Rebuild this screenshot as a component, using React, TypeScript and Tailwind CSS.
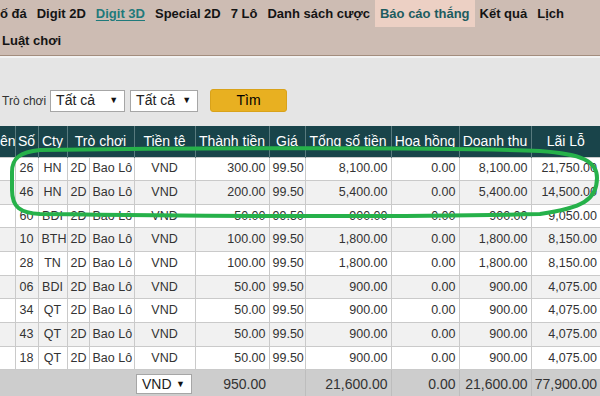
import React from "react";

const navItems: { label: string; kind?: "link" | "active" }[] = [
  { label: "ố đá" },
  { label: "Digit 2D" },
  { label: "Digit 3D", kind: "link" },
  { label: "Special 2D" },
  { label: "7 Lô" },
  { label: "Danh sách cược" },
  { label: "Báo cáo thắng", kind: "active" },
  { label: "Kết quả" },
  { label: "Lịch" },
];

type Row = [string, string, string, string, string, string, string, string];

const rows: Row[] = [
  ["26", "HN", "300.00", "99.50", "8,100.00", "0.00", "8,100.00", "21,750.00"],
  ["46", "HN", "200.00", "99.50", "5,400.00", "0.00", "5,400.00", "14,500.00"],
  ["60", "BDI", "50.00", "99.50", "900.00", "0.00", "900.00", "9,050.00"],
  ["10", "BTH", "100.00", "99.50", "1,800.00", "0.00", "1,800.00", "8,150.00"],
  ["28", "TN", "100.00", "99.50", "1,800.00", "0.00", "1,800.00", "8,150.00"],
  ["06", "BDI", "50.00", "99.50", "900.00", "0.00", "900.00", "4,075.00"],
  ["34", "QT", "50.00", "99.50", "900.00", "0.00", "900.00", "4,075.00"],
  ["43", "QT", "50.00", "99.50", "900.00", "0.00", "900.00", "4,075.00"],
  ["18", "QT", "50.00", "99.50", "900.00", "0.00", "900.00", "4,075.00"],
];

const colWidths = [15, 23, 29, 22, 45, 61, 74, 36, 86, 68, 72, 69];

function FakeSelect({ label, w, h, textSize }: { label: string; w: string; h: string; textSize: string }) {
  return (
    <div
      className={`${w} ${h} ${textSize} flex items-center justify-between border border-[#a6a6a6] bg-white pl-[5px] pr-[6px] text-[#222]`}
    >
      <span>{label}</span>
      <span className="text-[9px] leading-none text-[#111]">▼</span>
    </div>
  );
}

export default function App() {
  const th = "border-x border-[#587a7e] font-normal text-[14px] text-white overflow-hidden whitespace-nowrap";
  const td = "border border-[#cacaca] px-[3px] overflow-hidden whitespace-nowrap";
  return (
    <div
      className="relative w-[600px] h-[396px] overflow-hidden bg-[#e5e5e5]"
      style={{ fontFamily: '"Liberation Sans", Arial, sans-serif' }}
    >
      {/* Top navigation */}
      <div className="h-[56px] border-b border-[#a38d7e] bg-[#cdbcb3]">
        <div className="flex h-[27px] items-stretch ml-[-5px]">
          {navItems.map((it) => (
            <div
              key={it.label}
              className={`flex items-center px-[5px] text-[13px] font-bold whitespace-nowrap ${
                it.kind === "active"
                  ? "bg-[#ecd0c4] text-[#1d5c60]"
                  : it.kind === "link"
                  ? "text-[#1f7a7b] underline underline-offset-2"
                  : "text-[#141414]"
              }`}
            >
              {it.label}
            </div>
          ))}
        </div>
        <div className="flex h-[29px] items-center pl-[2px] pb-[1px] text-[13px] font-bold text-[#141414]">
          Luật chơi
        </div>
      </div>
      <div className="h-[2px] bg-[#f3f3f3]" />

      {/* Filter row */}
      <div className="flex items-center h-[68px] pt-[20px] pb-[3px] pl-[2px]">
        <span className="text-[12px] text-[#333] mr-[4px]">Trò chơi</span>
        <FakeSelect label="Tất cả" w="w-[75px]" h="h-[22px]" textSize="text-[14px]" />
        <div className="w-[5px]" />
        <FakeSelect label="Tất cả" w="w-[68px]" h="h-[22px]" textSize="text-[14px]" />
        <button className="ml-[12px] flex h-[23px] w-[77px] items-center justify-center rounded-[3px] border border-[#d9a21a] bg-[#e8b021] text-[14px] text-black">
          Tìm
        </button>
      </div>

      {/* Table */}
      <table className="w-[600px] table-fixed border-collapse">
        <colgroup>
          {colWidths.map((w, i) => (
            <col key={i} style={{ width: w }} />
          ))}
        </colgroup>
        <thead>
          <tr className="h-[31px] bg-[#19444a]">
            <th className={`${th} text-right border-l-0`}>ên</th>
            <th className={th}>Số</th>
            <th className={th}>Cty</th>
            <th className={th} colSpan={2}>
              Trò chơi
            </th>
            <th className={th}>Tiền tệ</th>
            <th className={th}>Thành tiền</th>
            <th className={th}>Giá</th>
            <th className={th}>Tổng số tiền</th>
            <th className={th}>Hoa hồng</th>
            <th className={th}>Doanh thu</th>
            <th className={`${th} border-r-0`}>Lãi Lỗ</th>
          </tr>
        </thead>
        <tbody className="text-[12.5px] text-[#333]">
          {rows.map((r, i) => (
            <tr key={i} className={`h-[23.67px] ${i % 2 === 0 ? "bg-white" : "bg-[#f1f1f1]"}`}>
              <td className={`${td} border-l-0`}></td>
              <td className={`${td} text-center px-0`}>{r[0]}</td>
              <td className={`${td} text-center px-0`}>{r[1]}</td>
              <td className={`${td} text-center px-0`}>2D</td>
              <td className={`${td} text-center px-0`}>Bao Lô</td>
              <td className={`${td} text-center`}>VND</td>
              <td className={`${td} text-right`}>{r[2]}</td>
              <td className={`${td} text-right px-[2px]`}>{r[3]}</td>
              <td className={`${td} text-right`}>{r[4]}</td>
              <td className={`${td} text-right`}>{r[5]}</td>
              <td className={`${td} text-right`}>{r[6]}</td>
              <td className={`${td} text-right border-r-0`}>{r[7]}</td>
            </tr>
          ))}
          <tr className="h-[28px] bg-[#cdcdcd] text-[14px] text-[#333] border-t border-[#b3b3b3]">
            <td colSpan={5}></td>
            <td className="px-[2px]">
              <FakeSelect label="VND" w="w-[56px]" h="h-[20px]" textSize="text-[14px]" />
            </td>
            <td className="text-right px-[3px]">950.00</td>
            <td className="border-r border-[#bdbdbd]"></td>
            <td className="text-right px-[3px] border-r border-[#bdbdbd]">21,600.00</td>
            <td className="text-right px-[3px]">0.00</td>
            <td className="text-right px-[3px] border-x border-[#bdbdbd]">21,600.00</td>
            <td className="text-right px-[3px]">77,900.00</td>
          </tr>
        </tbody>
      </table>

      {/* Green hand-drawn annotation */}
      <svg
        className="pointer-events-none absolute inset-0"
        width="600"
        height="396"
        viewBox="0 0 600 396"
      >
        <path
          d="M 40 150 C 200 148, 450 147, 540 151 C 582 154, 597 161, 597 178 C 597 200, 582 208, 540 214 C 420 217, 200 216, 40 214 C 20 213, 12 207, 12 190 L 12 172 C 12 158, 20 152, 40 150 Z"
          fill="none"
          stroke="#26b14a"
          strokeWidth="4"
        />
      </svg>
    </div>
  );
}
